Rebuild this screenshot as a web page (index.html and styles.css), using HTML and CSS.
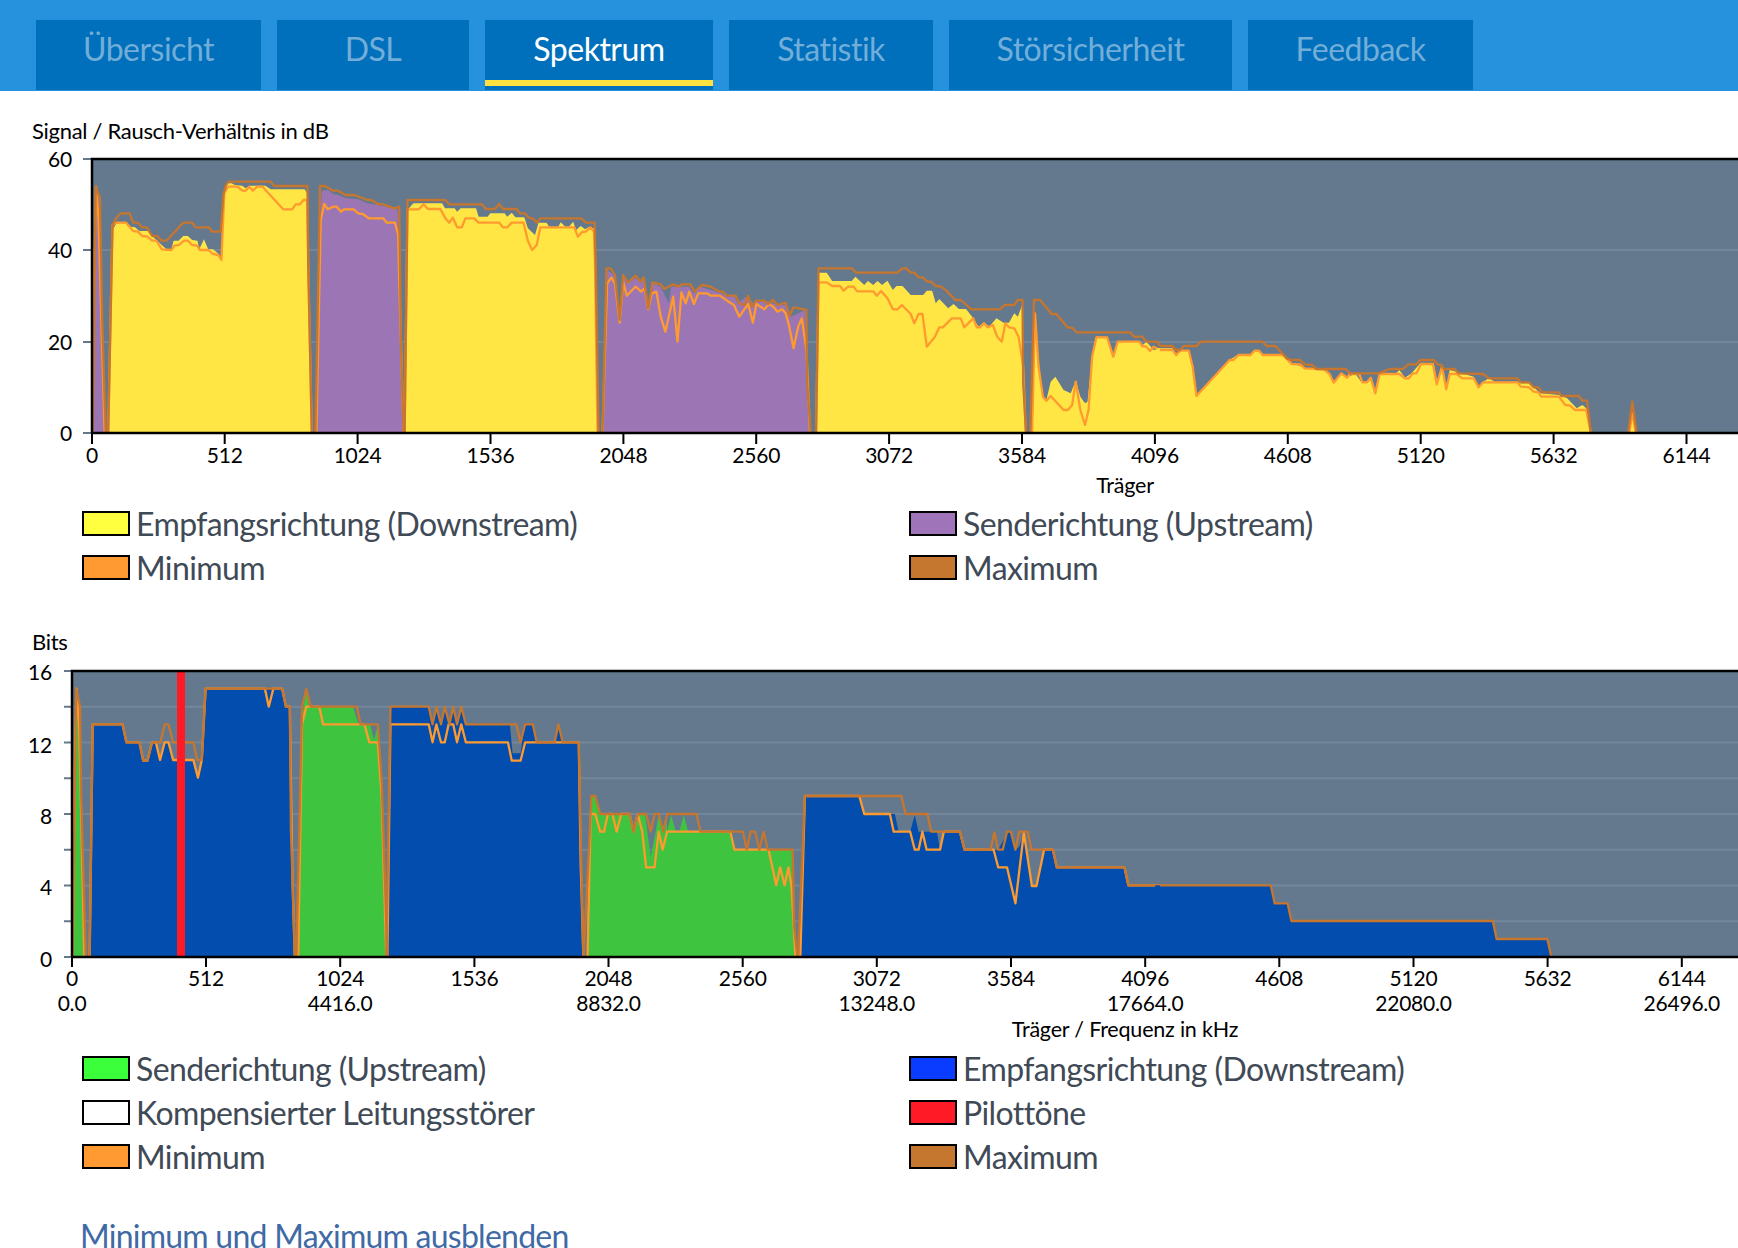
FILE: index.html
```html
<!DOCTYPE html>
<html lang="de">
<head>
  <meta charset="UTF-8">
  <title>Spektrum</title>
  <link rel="stylesheet" href="styles.css">
</head>
<body>

<header class="topbar">
  <nav class="tabs">
    <a class="tab tab-overview">Übersicht</a>
    <a class="tab tab-dsl">DSL</a>
    <a class="tab tab-spectrum active">Spektrum</a>
    <a class="tab tab-stats">Statistik</a>
    <a class="tab tab-noise">Störsicherheit</a>
    <a class="tab tab-feedback">Feedback</a>
  </nav>
</header>

<main class="content">

  <!-- Signal / Rausch chart -->
  <section class="chart chart-snr">
    <div class="chart-title">Signal / Rausch-Verhältnis in dB</div>
    <svg class="plot plot-snr" viewBox="0 150 1738 350" xmlns="http://www.w3.org/2000/svg">
      <rect class="plot-bg" x="92" y="159" width="1646" height="274"/>
      <path class="grid" d="M92 250H1738M92 342H1738"/>
      <path class="tick-y" d="M83 159H92M83 250H92M83 342H92M83 433H92"/>

      <g transform="translate(60 150) scale(.35714 .33333)">
        <polygon class="fill-up" points="90,848 92,500 100,110 112,145 118,500 125,848"/>
        <polygon class="fill-down" points="135,848 148,240 155,225 162,218 185,218 197,230 210,232 222,243 245,243 258,258 270,270 285,285 298,298 312,298 318,272 332,272 345,258 358,258 370,270 385,272 390,298 403,268 415,298 428,298 445,312 452,330 462,110 470,100 480,100 490,105 510,107 520,115 530,107 575,107 590,118 685,118 692,130 695,340 705,848"/>
        <polygon class="fill-up" points="718,848 728,200 733,122 750,120 765,132 780,135 800,145 835,148 860,160 890,165 945,178 950,260 962,848"/>
        <polygon class="fill-down" points="965,848 973,180 985,165 990,160 1070,160 1078,175 1105,175 1112,185 1122,175 1165,175 1172,200 1197,200 1205,190 1245,190 1252,200 1265,188 1275,202 1300,202 1310,235 1330,255 1340,218 1362,218 1370,230 1395,230 1402,217 1415,230 1425,230 1437,215 1445,240 1458,228 1470,238 1480,232 1495,235 1497,340 1505,848"/>

        <polyline class="line-min" points="90,848 95,400 101,110 108,210 118,600 125,848"/>
        <polyline class="line-min" points="135,848 147,225 157,218 185,218 205,243 218,245 230,258 245,260 258,272 270,272 285,298 312,300 320,287 333,285 347,272 358,272 370,285 384,287 392,300 415,300 428,312 443,315 452,330 460,130 470,110 497,110 510,122 520,122 530,110 540,122 552,110 567,110 625,178 650,178 660,163 672,163 682,150 692,150 695,340 705,848"/>
        <polyline class="line-min" points="718,848 730,210 740,162 750,178 765,170 775,170 787,185 795,178 822,178 835,190 848,192 865,205 905,205 915,218 938,218 947,255 950,400 962,848"/>
        <polyline class="line-min" points="965,848 973,178 1005,178 1018,163 1030,177 1065,177 1078,203 1090,218 1100,203 1112,232 1125,232 1135,205 1160,205 1172,218 1230,218 1240,232 1252,232 1265,218 1298,218 1310,272 1322,300 1335,285 1345,232 1440,232 1450,260 1462,246 1472,245 1485,232 1495,245 1498,340 1505,848"/>

        <polyline class="line-max" points="92,848 100,110 112,145 118,500 128,848"/>
        <polyline class="line-max" points="135,848 147,225 157,205 170,190 195,190 205,218 218,218 230,232 243,232 258,258 272,258 285,272 298,272 345,218 370,218 380,232 418,232 425,245 450,245 458,130 465,105 472,95 590,95 600,108 693,108 695,340 705,848"/>
        <polyline class="line-max" points="715,848 728,108 742,108 765,122 778,122 800,135 825,135 860,150 872,150 890,162 905,163 935,175 950,170 955,600 962,848"/>
        <polyline class="line-max" points="965,848 973,150 1078,150 1090,163 1182,163 1192,177 1218,177 1230,162 1240,177 1278,177 1288,190 1302,190 1312,203 1323,205 1335,218 1345,205 1460,205 1472,218 1497,218 1500,340 1508,848"/>
      </g>

      <g transform="translate(600 150) scale(.35714 .33333)">
        <polygon class="fill-up" points="7,848 15,500 20,360 40,375 50,480 58,510 65,380 80,395 100,385 115,395 125,385 135,450 145,400 170,410 192,460 200,410 250,410 262,430 280,410 340,430 360,440 375,435 385,460 410,440 430,460 440,455 470,455 500,465 525,465 535,500 575,480 578,600 590,848"/>
        <polygon class="fill-down" points="605,848 612,368 635,368 650,393 705,393 715,380 740,405 750,393 765,405 777,393 790,405 805,392 820,420 830,408 847,408 870,435 905,435 915,422 930,422 940,460 950,447 975,475 990,462 1005,477 1025,477 1045,505 1060,530 1075,517 1090,530 1110,505 1130,518 1145,518 1160,490 1170,500 1182,465 1183,600 1193,848"/>
        <polygon class="fill-down" points="1210,848 1218,490 1225,600 1240,745 1250,750 1262,695 1275,680 1298,720 1318,730 1332,692 1345,740 1358,760 1365,755 1378,620 1390,560 1420,560 1440,620 1450,573 1510,573 1520,585 1530,575 1550,600 1568,595 1568,848"/>

        <polyline class="line-min" points="7,848 20,400 32,383 42,400 55,518 65,395 75,437 90,420 100,410 115,425 125,415 135,478 145,430 158,425 170,500 183,545 205,440 217,575 228,427 240,460 250,425 263,462 275,430 300,430 310,437 335,437 360,455 375,465 390,500 415,462 428,518 438,462 460,478 473,462 485,470 497,485 510,478 520,490 530,530 542,595 555,530 565,505 578,600 588,848"/>
        <polyline class="line-min" points="605,848 612,397 635,397 650,408 672,408 682,422 695,410 710,410 720,424 765,424 775,437 787,423 805,445 820,478 833,478 845,465 870,492 880,520 892,492 903,492 915,590 937,562 950,532 960,532 985,505 1010,505 1020,532 1045,505 1055,532 1065,532 1075,520 1085,532 1100,525 1112,560 1125,575 1135,520 1145,532 1160,535 1172,560 1185,650 1192,848"/>
        <polyline class="line-min" points="1210,848 1218,490 1228,650 1240,740 1250,752 1262,738 1298,780 1310,780 1322,765 1332,695 1345,780 1358,825 1368,780 1378,620 1390,562 1420,562 1437,620 1450,575 1510,575 1518,588 1530,590 1540,603 1550,590 1568,600"/>

        <polyline class="line-max" points="7,848 18,355 30,355 42,375 55,510 65,375 78,397 100,377 113,395 122,382 135,475 147,397 170,403 180,417 205,403 220,410 230,403 253,403 265,425 285,405 310,410 335,425 345,425 355,437 380,437 390,460 405,465 415,437 425,470 437,452 460,452 470,462 485,450 497,465 520,458 530,498 542,472 578,480 580,700 590,848"/>
        <polyline class="line-max" points="605,848 612,355 705,355 717,368 833,368 847,355 858,355 870,368 880,368 892,382 903,382 917,395 927,395 940,408 955,410 970,422 995,450 1010,450 1040,478 1120,478 1133,465 1160,465 1170,450 1183,450 1185,700 1193,848"/>
        <polyline class="line-max" points="1205,848 1215,450 1232,450 1265,492 1278,492 1310,533 1322,533 1335,547 1485,547 1495,560 1518,560 1530,575 1560,575 1568,588"/>
      </g>

      <g transform="translate(1140 150) scale(.38139 .33333)">
        <polygon class="fill-down" points="45,848 45,595 85,595 95,615 105,600 128,600 138,650 148,735 235,630 255,615 290,615 300,600 310,600 325,615 375,615 400,640 425,650 435,655 480,658 495,670 508,695 528,670 545,680 565,672 580,695 595,695 605,680 617,725 628,672 670,672 680,660 695,683 712,670 735,640 770,640 780,700 792,650 803,715 812,660 830,665 875,680 888,710 900,695 915,685 930,695 990,695 1000,700 1020,700 1050,730 1100,735 1120,745 1145,775 1160,765 1170,775 1182,848"/>
        <polygon class="fill-down" points="1285,848 1291,790 1298,848"/>

        <polyline class="line-min" points="52,600 85,600 95,615 105,602 128,602 138,650 148,738 235,630 245,630 258,615 290,615 300,602 312,602 322,615 375,615 397,642 420,643 432,655 482,658 497,672 508,698 528,670 543,683 550,672 575,672 583,697 595,697 605,683 617,730 628,672 680,672 695,685 705,685 715,670 725,670 737,642 768,642 778,703 792,650 803,718 812,672 830,672 845,685 875,685 888,712 900,697 990,697 998,710 1020,712 1032,725 1045,727 1052,740 1098,740 1115,765 1128,767 1140,780 1170,780 1182,848"/>
        <polyline class="line-min" points="1283,848 1291,790 1300,848"/>

        <polyline class="line-max" points="52,588 85,588 95,600 105,600 115,588 148,588 160,575 322,575 332,588 355,588 385,625 395,630 420,630 432,643 452,645 462,657 540,657 550,670 625,670 655,657 690,657 703,643 725,643 735,630 770,630 780,643 790,645 797,657 825,657 835,670 900,672 915,685 990,685 998,697 1020,697 1032,712 1045,712 1055,727 1098,727 1105,738 1150,738 1160,752 1172,752 1182,848"/>
        <polyline class="line-max" points="1280,848 1291,755 1302,848"/>
      </g>

      <path class="frame" d="M92 433V159H1738M92 433H1738"/>
      <path class="tick-x" d="M92 433V444M224.7 433V444M357.6 433V444M490.5 433V444M623.4 433V444M756.2 433V444M889.1 433V444M1022 433V444M1154.9 433V444M1287.8 433V444M1420.7 433V444M1553.6 433V444M1686.5 433V444"/>

      <text class="label label-end" x="72" y="167">60</text>
      <text class="label label-end" x="72" y="258">40</text>
      <text class="label label-end" x="72" y="350">20</text>
      <text class="label label-end" x="72" y="441">0</text>

      <text class="label" x="92" y="463">0</text>
      <text class="label" x="224.7" y="463">512</text>
      <text class="label" x="357.6" y="463">1024</text>
      <text class="label" x="490.5" y="463">1536</text>
      <text class="label" x="623.4" y="463">2048</text>
      <text class="label" x="756.2" y="463">2560</text>
      <text class="label" x="889.1" y="463">3072</text>
      <text class="label" x="1022" y="463">3584</text>
      <text class="label" x="1154.9" y="463">4096</text>
      <text class="label" x="1287.8" y="463">4608</text>
      <text class="label" x="1420.7" y="463">5120</text>
      <text class="label" x="1553.6" y="463">5632</text>
      <text class="label" x="1686.5" y="463">6144</text>
      <text class="label axis-title" x="1125" y="493">Träger</text>
    </svg>
    <ul class="legend">
      <li><span class="swatch swatch-yellow"></span>Empfangsrichtung (Downstream)</li>
      <li><span class="swatch swatch-purple"></span>Senderichtung (Upstream)</li>
      <li><span class="swatch swatch-min"></span>Minimum</li>
      <li><span class="swatch swatch-max"></span>Maximum</li>
    </ul>
  </section>

  <!-- Bits chart -->
  <section class="chart chart-bits">
    <div class="chart-title">Bits</div>
    <svg class="plot plot-bits" viewBox="0 661 1738 384" xmlns="http://www.w3.org/2000/svg">
      <rect class="plot-bg" x="72" y="671" width="1666" height="286"/>
      <path class="grid" d="M72 706.7H1738M72 742.4H1738M72 778.2H1738M72 814H1738M72 849.7H1738M72 885.4H1738M72 921.2H1738"/>
      <path class="tick-y" d="M64 671H72M64 706.7H72M64 742.4H72M64 778.2H72M64 814H72M64 849.7H72M64 885.4H72M64 921.2H72M64 957H72"/>

      <g transform="translate(20 630) scale(.3827 .33333)">
        <polygon class="fill-green" points="138,980 140,500 147,190 155,240 162,700 166,980"/>
        <polygon class="fill-blue" points="182,980 190,283 268,283 278,337 312,337 322,390 333,390 345,337 355,337 365,390 378,337 387,337 398,390 453,390 465,443 475,390 485,176 685,176 695,230 705,230 712,750 718,980"/>
        <polygon class="fill-green" points="727,980 735,283 748,176 755,230 870,230 885,283 915,283 925,330 935,283 940,400 950,750 957,980"/>
        <polygon class="fill-blue" points="960,980 968,283 968,230 1068,230 1078,283 1088,230 1100,283 1110,230 1120,283 1132,230 1142,283 1153,230 1165,283 1280,283 1287,370 1308,370 1318,283 1340,283 1350,337 1397,337 1407,285 1417,337 1460,337 1463,600 1470,980"/>

        <polyline class="line-min" points="138,980 143,400 148,176 155,300 168,980"/>
        <polyline class="line-min" points="182,980 190,283 268,283 278,337 312,337 322,392 333,392 345,337 355,337 366,390 378,337 388,337 400,390 453,390 465,443 475,390 485,176 640,176 650,230 662,176 685,176 695,230 705,230 712,750 718,980"/>
        <polyline class="line-min" points="727,980 737,283 748,230 782,230 792,283 900,283 913,337 935,337 945,500 957,980"/>
        <polyline class="line-min" points="960,980 968,283 1068,283 1078,337 1088,283 1100,337 1110,337 1120,283 1132,283 1142,337 1153,283 1165,337 1275,337 1285,392 1308,392 1320,337 1460,337 1465,700 1472,980"/>

        <polyline class="line-max" points="137,980 147,176 157,230 160,500 172,980"/>
        <polyline class="line-max" points="182,980 190,283 268,283 278,337 312,337 322,392 333,392 345,337 367,337 378,283 388,283 400,337 453,337 463,390 475,390 485,176 685,176 695,230 705,230 708,600 718,980"/>
        <polyline class="line-max" points="722,980 737,230 748,176 760,230 880,230 890,283 935,283 945,450 955,800 960,980"/>
        <polyline class="line-max" points="957,980 968,230 1068,230 1078,283 1088,230 1100,283 1110,230 1122,283 1132,230 1142,283 1153,230 1165,283 1297,283 1308,337 1320,283 1340,283 1350,337 1397,337 1407,283 1418,337 1460,337 1463,500 1472,980"/>
      </g>

      <g transform="translate(560 660) scale(.3827 .33333)">
        <polygon class="fill-green" points="72,888 80,462 82,408 92,408 105,462 185,462 192,510 203,462 222,462 237,590 250,515 258,462 268,510 278,462 280,515 290,465 303,515 312,515 323,465 335,515 447,515 458,569 608,569 610,600 617,888"/>
        <polygon class="fill-blue" points="628,888 640,408 782,408 795,462 875,462 885,515 915,515 927,465 937,515 985,515 993,569 1003,515 1045,515 1057,569 1145,569 1170,517 1178,517 1190,569 1200,560 1212,518 1233,678 1245,678 1265,569 1288,569 1298,622 1475,622 1485,676 1568,676 1568,888"/>

        <polyline class="line-min" points="72,888 80,462 92,462 105,515 115,515 125,462 137,462 148,515 160,462 182,462 192,515 203,462 215,515 225,622 247,622 258,515 268,569 280,515 445,515 456,569 545,569 565,676 575,622 587,676 597,622 605,680 615,888"/>
        <polyline class="line-min" points="628,888 640,408 782,408 795,462 862,462 872,515 915,515 927,569 937,569 947,515 958,569 993,569 1003,515 1045,515 1057,569 1133,569 1145,622 1168,622 1190,730 1212,518 1233,678 1245,678 1265,569 1288,569 1298,622 1475,622 1485,676 1568,676"/>

        <polyline class="line-max" points="62,888 82,408 92,408 105,462 182,462 192,515 203,462 225,462 237,515 247,462 258,462 270,515 280,462 357,462 367,515 478,515 488,569 498,515 510,515 521,569 532,515 543,569 608,569 612,800 620,888"/>
        <polyline class="line-max" points="622,888 640,408 892,408 903,462 960,462 970,515 1045,515 1057,569 1125,569 1135,517 1145,569 1157,569 1168,515 1178,515 1190,569 1200,515 1222,515 1232,569 1288,569 1298,622 1475,622 1485,676 1568,676"/>
      </g>

      <g transform="translate(1140 660) scale(.38139 .33333)">
        <polygon class="fill-blue" points="40,888 40,676 343,676 353,730 387,730 397,783 925,783 935,837 1068,837 1078,888"/>
        <polyline class="line-max" points="52,676 343,676 353,730 387,730 397,783 925,783 935,837 1068,837 1078,888"/>
      </g>

      <rect class="pilot" x="177" y="671" width="8" height="286"/>
      <path class="frame" d="M72 957V671H1738M72 957H1738"/>
      <path class="tick-x" d="M72 957V967M206 957V967M340.2 957V967M474.4 957V967M608.5 957V967M742.7 957V967M876.8 957V967M1011 957V967M1145.2 957V967M1279.3 957V967M1413.5 957V967M1547.6 957V967M1681.8 957V967"/>

      <text class="label label-end" x="52" y="680">16</text>
      <text class="label label-end" x="52" y="753">12</text>
      <text class="label label-end" x="52" y="824">8</text>
      <text class="label label-end" x="52" y="895">4</text>
      <text class="label label-end" x="52" y="967">0</text>

      <text class="label" x="72" y="986">0</text>
      <text class="label" x="206" y="986">512</text>
      <text class="label" x="340.2" y="986">1024</text>
      <text class="label" x="474.4" y="986">1536</text>
      <text class="label" x="608.5" y="986">2048</text>
      <text class="label" x="742.7" y="986">2560</text>
      <text class="label" x="876.8" y="986">3072</text>
      <text class="label" x="1011" y="986">3584</text>
      <text class="label" x="1145.2" y="986">4096</text>
      <text class="label" x="1279.3" y="986">4608</text>
      <text class="label" x="1413.5" y="986">5120</text>
      <text class="label" x="1547.6" y="986">5632</text>
      <text class="label" x="1681.8" y="986">6144</text>

      <text class="label" x="72" y="1011">0.0</text>
      <text class="label" x="340.2" y="1011">4416.0</text>
      <text class="label" x="608.5" y="1011">8832.0</text>
      <text class="label" x="876.8" y="1011">13248.0</text>
      <text class="label" x="1145.2" y="1011">17664.0</text>
      <text class="label" x="1413.5" y="1011">22080.0</text>
      <text class="label" x="1681.8" y="1011">26496.0</text>
      <text class="label axis-title" x="1125" y="1037">Träger / Frequenz in kHz</text>
    </svg>
    <ul class="legend">
      <li><span class="swatch swatch-green"></span>Senderichtung (Upstream)</li>
      <li><span class="swatch swatch-blue"></span>Empfangsrichtung (Downstream)</li>
      <li><span class="swatch swatch-white"></span>Kompensierter Leitungsstörer</li>
      <li><span class="swatch swatch-red"></span>Pilottöne</li>
      <li><span class="swatch swatch-min"></span>Minimum</li>
      <li><span class="swatch swatch-max"></span>Maximum</li>
    </ul>
  </section>

  <a class="toggle-link">Minimum und Maximum ausblenden</a>
</main>

</body>
</html>
```

FILE: styles.css
```css
/* Global Styling */
html, body {
  margin: 0;
  overflow-x: hidden;
  background: #fff;
}
body {
  font-family: Lato, "Noto Sans", sans-serif;
  color: #000;
}

/* Top navigation */
.topbar {
  height: 91px;
  background-color: #2691dc;
  box-sizing: border-box;
  padding: 20px 0 1px 36px;
}
.tabs {
  display: flex;
  gap: 16px;
  height: 70px;
}
.tab {
  box-sizing: border-box;
  padding-top: 11px;
  height: 70px;
  text-align: center;
  font-size: 32px;
  line-height: 36px;
  color: #72aed8;
  background-color: #0070bd;
  letter-spacing: -0.5px;
}
.tab-overview { width: 225px; }
.tab-dsl { width: 192px; }
.tab-spectrum { width: 228px; }
.tab-stats { width: 204px; }
.tab-noise { width: 283px; }
.tab-feedback { width: 225px; }
.tab.active {
  color: #fff;
  background: linear-gradient(#0070bd 60px, #ffe23f 60px, #ffe23f 66px, #0070bd 66px);
}

/* Charts */
.content {
  padding-top: 24px;
}
.chart-title {
  padding-left: 32px;
  height: 35px;
  font-size: 22px;
  line-height: 32px;
  letter-spacing: -0.3px;
}
.plot {
  display: block;
  width: 1738px;
  overflow: visible;
}
.plot-snr { height: 350px; }
.plot-bits { height: 384px; }
.chart-bits { margin-top: 37px; }

.plot-bg { fill: #64798d; }
.grid { stroke: #74879a; stroke-width: 2; fill: none; }
.tick-y { stroke: #64798d; stroke-width: 2; fill: none; }
.tick-x { stroke: #000; stroke-width: 2; fill: none; }
.frame { stroke: #000; stroke-width: 2.5; fill: none; }
.pilot { fill: #ff1a25; }

.fill-down { fill: #ffe645; }
.fill-up { fill: #9b75b4; }
.fill-green { fill: #3ec43e; }
.fill-blue { fill: #034dae; }

.line-min, .line-max {
  fill: none;
  stroke-width: 2.3px;
  stroke-linejoin: round;
  vector-effect: non-scaling-stroke;
}
.line-min { stroke: #ff9a2f; }
.line-max { stroke: #c6762f; }

.label {
  font-family: Lato, "Noto Sans", sans-serif;
  font-size: 21px;
  letter-spacing: -0.2px;
  text-anchor: middle;
  fill: #000;
}
.label-end { text-anchor: end; }
.axis-title { font-size: 21.5px; }

/* Legend */
.legend {
  display: grid;
  grid-template-columns: 827px 1fr;
  grid-auto-rows: 44px;
  list-style: none;
  margin: 1px 0 0;
  padding: 0 0 0 82px;
  font-size: 32px;
  color: #3f4a56;
  letter-spacing: -0.6px;
}
.legend li {
  display: flex;
  align-items: center;
  gap: 6px;
}
.swatch {
  box-sizing: border-box;
  flex: none;
  width: 48px;
  height: 25px;
  border: 2.5px solid #000;
}
.swatch-yellow { background-color: #ffff40; }
.swatch-purple { background-color: #a074b8; }
.swatch-min { background-color: #ff9a33; }
.swatch-max { background-color: #c57730; }
.swatch-green { background-color: #3cff3c; }
.swatch-blue { background-color: #0a3cff; }
.swatch-white { background-color: #fff; }
.swatch-red { background-color: #ff1a25; }

.toggle-link {
  display: block;
  margin: 46px 0 0 80px;
  font-size: 32px;
  line-height: 24px;
  color: #3f6aa5;
  letter-spacing: -0.75px;
}
```
